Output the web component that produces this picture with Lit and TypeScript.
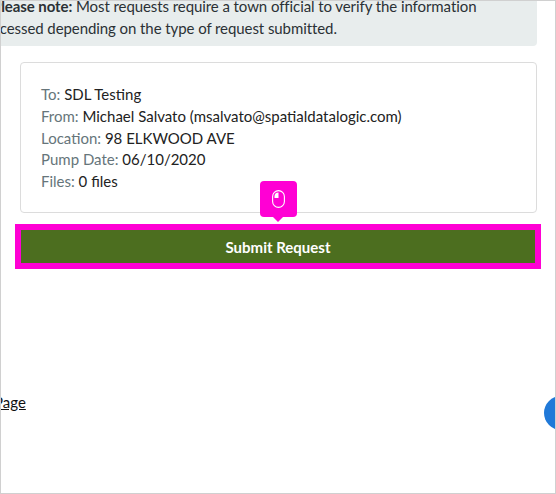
import { LitElement, html, css } from 'lit';
import { customElement } from 'lit/decorators.js';

@customElement('app-root')
export class AppRoot extends LitElement {
  static styles = css`
    :host {
      display: block;
      font-family: 'Lato', 'Liberation Sans', sans-serif;
      font-size: 15px;
      line-height: 21.75px;
      color: #2b3135;
    }
    .frame {
      position: relative;
      box-sizing: border-box;
      width: 556px;
      height: 494px;
      border: 1px solid #d0d0d0;
      overflow: hidden;
      background: #fff;
    }
    .notice {
      width: 569px;
      height: 51px;
      margin: -6px 0 0 -33px;
      padding: 0 0 0 10px;
      box-sizing: border-box;
      background: #e8eded;
      border-radius: 4px;
      white-space: nowrap;
      text-indent: 14px;
      letter-spacing: -0.08px;
      line-height: 22px;
    }
    .notice b {
      font-weight: 700;
    }
    .card {
      box-sizing: border-box;
      width: 517px;
      height: 151px;
      margin: 16px 0 0 19px;
      padding: 21px 20px;
      border: 1px solid #dcdcdc;
      border-radius: 4px;
    }
    .row {
      white-space: nowrap;
      color: #222;
    }
    .row span {
      color: #66757a;
    }
    .submit-wrap {
      position: relative;
      margin: 17px 0 0 20px;
      width: 514px;
    }
    button {
      display: block;
      width: 100%;
      height: 33px;
      border: 0;
      padding: 0;
      background: #4c6e1f;
      color: #fff;
      font: 700 15px 'Lato', 'Liberation Sans', sans-serif;
      outline: 6px solid #ff00d4;
    }
    .tip {
      position: absolute;
      left: 239px;
      top: -49px;
      width: 37px;
      height: 36px;
      background: #ff00d4;
      border-radius: 4px;
      display: flex;
      align-items: center;
      justify-content: center;
    }
    .tip::after {
      content: '';
      position: absolute;
      left: 13px;
      bottom: -5px;
      border: 5px solid transparent;
      border-top-color: #ff00d4;
      border-bottom: 0;
    }
    .page-link {
      margin: 129px 0 0 -7px;
      color: #111;
      text-decoration: underline;
    }
    .fab {
      position: absolute;
      left: 543px;
      top: 395px;
      width: 34px;
      height: 34px;
      border-radius: 50%;
      background: #2079d8;
    }
  `;

  private renderRow(label: string, value: string) {
    return html`<div class="row"><span>${label}:</span> ${value}</div>`;
  }

  render() {
    return html`
      <div class="frame">
        <div class="notice">
          <b>Please note:</b> Most requests require a town official to verify the information<br />
          processed depending on the type of request submitted.
        </div>
        <div class="card">
          ${this.renderRow('To', 'SDL Testing')}
          ${this.renderRow('From', 'Michael Salvato (msalvato@spatialdatalogic.com)')}
          ${this.renderRow('Location', '98 ELKWOOD AVE')}
          ${this.renderRow('Pump Date', '06/10/2020')}
          ${this.renderRow('Files', '0 files')}
        </div>
        <div class="submit-wrap">
          <button>Submit Request</button>
          <div class="tip">
            <svg width="13" height="18" viewBox="0 0 13 18">
              <rect x="0.6" y="0.6" width="11.8" height="16.8" rx="5.9" fill="none" stroke="#fff" stroke-width="1.1" />
              <path d="M6.5 2.4a4 4 0 0 0-4 4V8h4z" fill="#fff" />
            </svg>
          </div>
        </div>
        <div class="page-link">Page</div>
        <div class="fab"></div>
      </div>
    `;
  }
}
